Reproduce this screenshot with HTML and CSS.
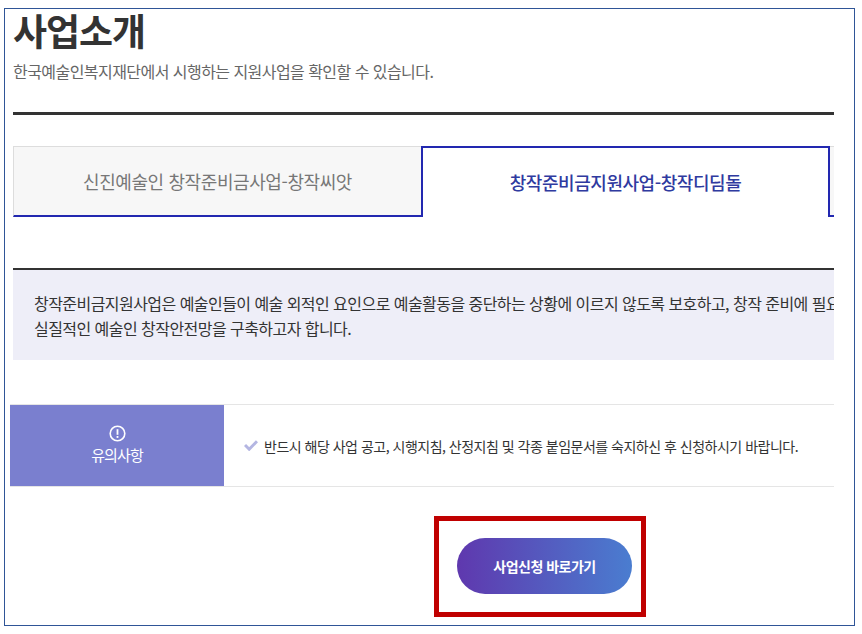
FILE: index.html
```html
<!DOCTYPE html>
<html lang="ko">
<head>
    <meta charset="UTF-8">
    <title>사업소개</title>
    <link rel="stylesheet" href="styles.css">
</head>
<body>
    <div class="frame">
        <div class="page">
            <div class="title-area">
                <h2>사업소개</h2>
                <p>한국예술인복지재단에서 시행하는 지원사업을 확인할 수 있습니다.</p>
            </div>

            <div class="tabs">
                <div class="tab">신진예술인 창작준비금사업-창작씨앗</div>
                <div class="tab active">창작준비금지원사업-창작디딤돌</div>
                <div class="tab-rest"></div>
            </div>

            <div class="intro">
                <p>창작준비금지원사업은 예술인들이 예술 외적인 요인으로 예술활동을 중단하는 상황에 이르지 않도록 보호하고, 창작 준비에 필요한 비용을 지원하여</p>
                <p>실질적인 예술인 창작안전망을 구축하고자 합니다.</p>
            </div>

            <div class="notice">
                <div class="notice-head">
                    <svg class="notice-icon" width="17" height="17" viewBox="0 0 17 17">
                        <circle cx="8.5" cy="8.5" r="7.3" fill="none" stroke="#fff" stroke-width="1.6"/>
                        <path d="M8.5 4.2v5.6" stroke="#fff" stroke-width="1.8" fill="none"/>
                        <path d="M8.5 11v1.9" stroke="#fff" stroke-width="1.8" fill="none"/>
                    </svg>
                    <span>유의사항</span>
                </div>
                <div class="notice-body">
                    <svg class="check" width="14" height="11" viewBox="0 0 14 11">
                        <path d="M1 5l4.2 4.2L13 1.2" fill="none" stroke="#b4b6e2" stroke-width="3"/>
                    </svg>
                    <span>반드시 해당 사업 공고, 시행지침, 산정지침 및 각종 붙임문서를 숙지하신 후 신청하시기 바랍니다.</span>
                </div>
            </div>

            <div class="apply">
                <div class="apply-mark">
                    <a class="apply-btn" href="#">사업신청 바로가기</a>
                </div>
            </div>
        </div>
    </div>
</body>
</html>
```

FILE: styles.css
```css
* {
  box-sizing: border-box;
}

body {
  margin: 0;
  background: #fff;
  font-family: "Noto Sans CJK KR", "Noto Sans", sans-serif;
  color: #333;
}

p, h2 {
  margin: 0;
}

.frame {
  width: 851px;
  height: 618px;
  margin: 8px 0 0 4px;
  border: 1px solid #2f5597;
  padding-left: 5px;
}

.page {
  width: 824px;
  height: 100%;
}

.title-area {
  margin-left: 3px;
  height: 106px;
  border-bottom: 3px solid #333;
}

.title-area h2 {
  font-size: 37px;
  line-height: 42px;
  font-weight: 700;
  letter-spacing: -1px;
}

.title-area p {
  margin-top: 9px;
  font-size: 16px;
  line-height: 22px;
  letter-spacing: -0.55px;
  color: #666;
}

.tabs {
  display: flex;
  margin: 31px 0 0 3px;
  height: 71px;
}

.tab {
  width: 408px;
  display: flex;
  align-items: center;
  justify-content: center;
  padding-bottom: 1px;
  font-size: 18px;
  letter-spacing: -0.4px;
  color: #777;
  background: #f7f7f7;
  border: 1px solid #ddd;
  border-bottom: 2px solid #2228b0;
  border-right: 0;
}

.tab.active {
  width: 409px;
  padding-bottom: 1px;
  letter-spacing: -0.45px;
  color: #2f3aa0;
  font-weight: 500;
  background: #fff;
  border: 2px solid #2228b0;
  border-bottom: 0;
}

.tab-rest {
  flex: 1;
  border-top: 1px solid #ddd;
  border-bottom: 2px solid #2228b0;
  background: #f7f7f7;
}

.intro {
  margin: 51px 0 0 3px;
  height: 92px;
  padding: 21px 0 0 21px;
  overflow: hidden;
  background: #eeeef8;
  border-top: 2px solid #333;
  font-size: 16px;
  line-height: 25px;
  letter-spacing: -0.55px;
  white-space: nowrap;
}

.notice {
  display: flex;
  margin-top: 44px;
  height: 83px;
  border-top: 1px solid #e5e5e5;
  border-bottom: 1px solid #e5e5e5;
}

.notice-head {
  width: 214px;
  display: flex;
  flex-direction: column;
  align-items: center;
  justify-content: center;
  padding-bottom: 2px;
  background: #7a7fcf;
  color: #fff;
  font-size: 15px;
  line-height: 21px;
  letter-spacing: -0.9px;
}

.notice-icon {
  margin-bottom: 2px;
}

.notice-body {
  flex: 1;
  display: flex;
  align-items: center;
  gap: 6px;
  padding-left: 20px;
  font-size: 14px;
  letter-spacing: -0.5px;
}

.apply {
  display: flex;
  margin: 29px 0 0 424px;
}

.apply-mark {
  width: 212px;
  height: 101px;
  padding: 17px 0 0 18px;
  border: 5px solid #c00000;
}

.apply-btn {
  display: flex;
  align-items: center;
  justify-content: center;
  width: 175px;
  height: 56px;
  border-radius: 28px;
  background: linear-gradient(90deg, #5f38ae, #4a7dd0);
  color: #fff;
  font-size: 14px;
  font-weight: 700;
  letter-spacing: -0.5px;
  text-decoration: none;
}
```
